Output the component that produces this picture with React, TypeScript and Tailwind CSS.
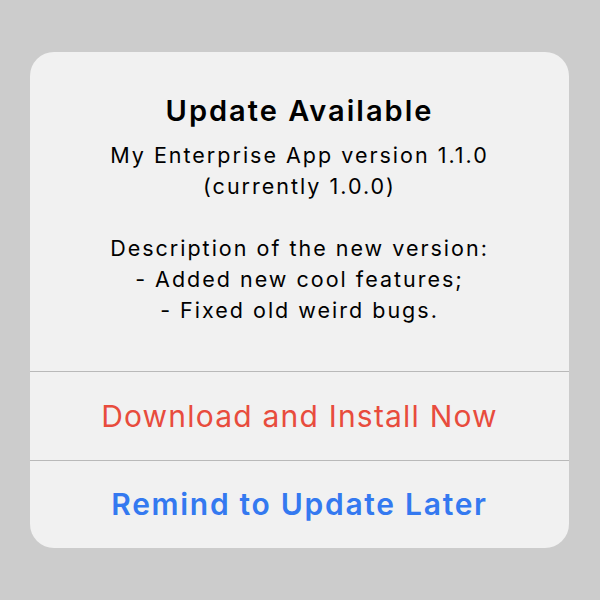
export default function App() {
  return (
    <div
      className="w-[600px] h-[600px] bg-[#cccccc] pt-[52px] px-[30px]"
      style={{ fontFamily: "Inter, 'Noto Sans', sans-serif" }}
    >
      <div className="w-[539px] h-[496px] bg-[#f1f1f1] rounded-[24px] overflow-hidden flex flex-col">
        {/* Message */}
        <div className="h-[319px] pt-[42px] flex flex-col items-center text-center text-black">
          <h1 className="text-[29px] leading-[34px] font-semibold tracking-[2px]">Update Available</h1>
          <p className="mt-[12px] text-[21.5px] leading-[31px] tracking-[2px]">
            My Enterprise App version 1.1.0
            <br />
            (currently 1.0.0)
            <br />
            <br />
            Description of the new version:
            <br />- Added new cool features;
            <br />- Fixed old weird bugs.
          </p>
        </div>

        {/* Actions */}
        <button className="h-[89px] border-t border-[#b9b9b9] flex items-center justify-center text-[30px] tracking-[1.2px] text-[#e84c3d]">
          Download and Install Now
        </button>
        <button className="flex-1 border-t border-[#b9b9b9] flex items-center justify-center text-[30px] font-semibold tracking-[1.7px] text-[#3479f0]">
          Remind to Update Later
        </button>
      </div>
    </div>
  );
}
